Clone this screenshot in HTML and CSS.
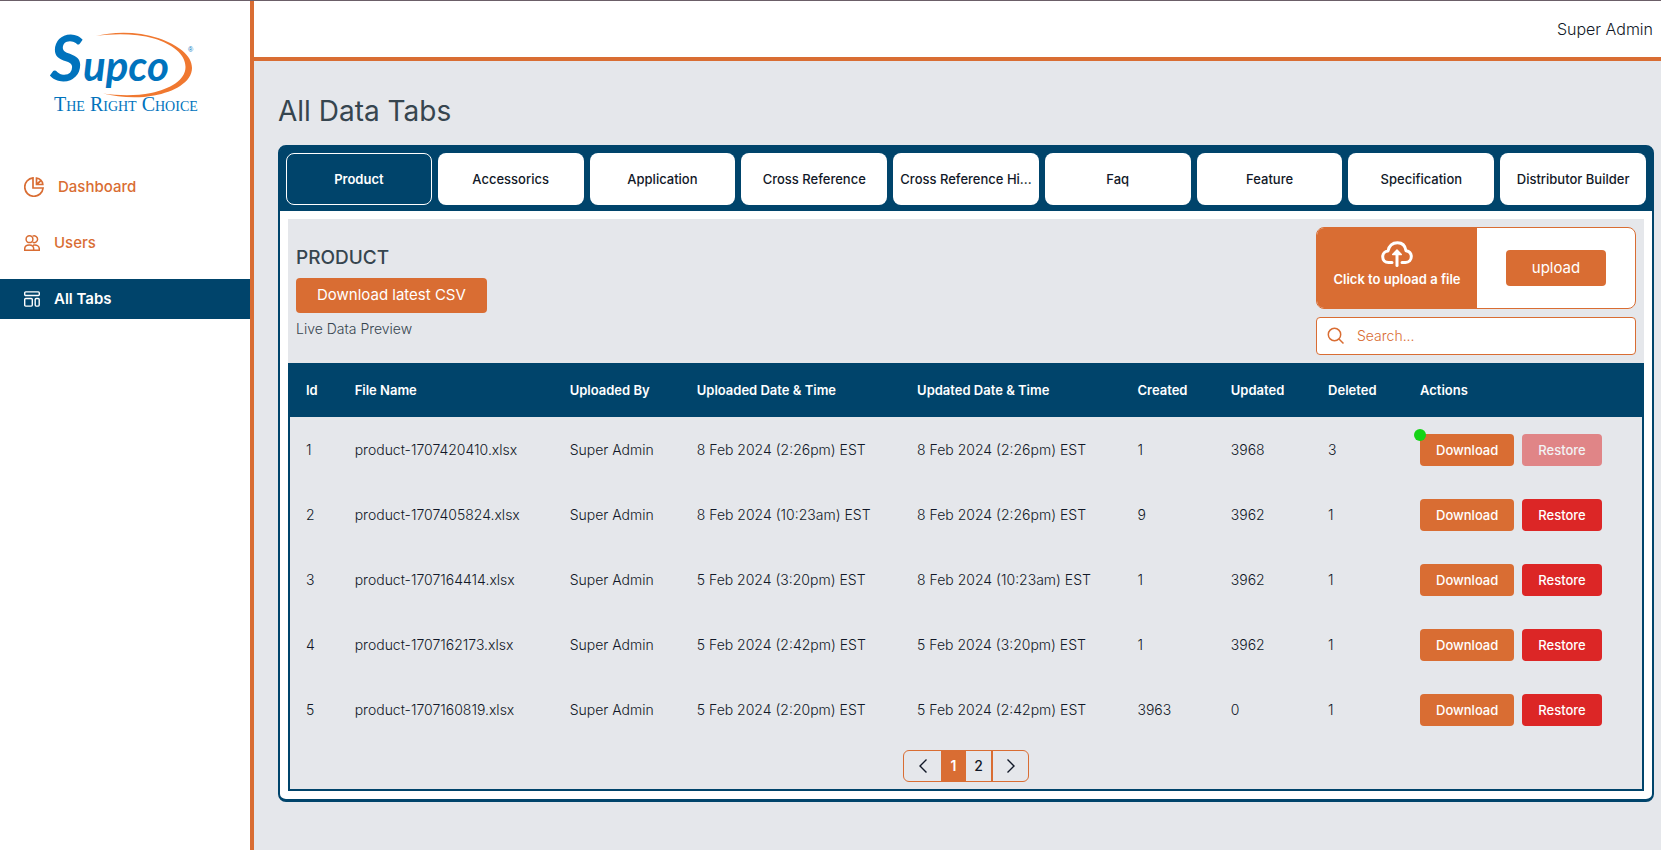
FILE: index.html
```html
<!DOCTYPE html>
<html lang="en">
<head>
<meta charset="utf-8">
<title>All Data Tabs</title>
<link rel="stylesheet" href="styles.css">
</head>
<body>
<div class="app">
  <aside class="sidebar">
    <a class="logo" href="#">
      <svg class="logo-art" width="150" height="90" viewBox="0 0 150 90" role="img" aria-label="Supco">
        <path fill="#f07830" d="M50 12C66 7.500 92 7 112 14C132 21 146 31 146 44C146 58 128 68 108 71.500C90 75 72 73 57 69.500C72 71.500 90 72 105 69C124 65 139.500 56 139.500 43C139.500 30 126 20 108 14.500C90 9 66 9.500 50 12Z"/>
        <text class="logo-word" x="4" y="57"><tspan class="logo-initial">S</tspan>upco</text>
        <text class="logo-mark" x="142" y="28">®</text>
        <text class="logo-tagline" x="8" y="87">The Right Choice</text>
      </svg>
    </a>
    <nav class="nav">
      <a class="nav-link" href="#">
        <svg width="20" height="20" viewBox="0 0 20 20" fill="none" stroke="currentColor" stroke-width="1.700"><path d="M9 .9A9.200 9.200 0 1 0 19.100 11H9ZM12.500 1.200V7.500H18.800A7 7 0 0 0 12.500 1.200ZM13 7L16.500 4"/></svg>
        <span class="nav-text">Dashboard</span>
      </a>
      <a class="nav-link" href="#">
        <svg width="16" height="16" viewBox="0 0 16 16" fill="none" stroke="currentColor" stroke-width="1.500"><circle cx="5.500" cy="4.200" r="3.400"/><path d="M8.600 1.200A3.400 3.400 0 1 1 8.600 7.200M.7 15.300V14C.7 11.500 2.500 10 5.200 10S9.700 11.500 9.700 14V15.300ZM9 10.200C13 9.300 15.300 11.300 15.300 14V15.300H9.700"/></svg>
        <span class="nav-text">Users</span>
      </a>
      <a class="nav-link nav-link-active" href="#">
        <svg width="16" height="16" viewBox="0 0 16 16" fill="none" stroke="currentColor" stroke-width="1.400"><rect x=".7" y=".9" width="14.600" height="3.600" rx="1"/><rect x=".7" y="7.500" width="7.600" height="7.600" rx="1"/><rect x="11.200" y="7.500" width="4" height="7.600" rx="1"/></svg>
        <span class="nav-text">All Tabs</span>
      </a>
    </nav>
  </aside>
  <div class="main">
    <header class="topbar">Super Admin</header>
    <main class="content">
      <h1 class="title">All Data Tabs</h1>
      <section class="panel">
        <div class="tabs">
          <button class="tab tab-active">Product</button>
          <button class="tab">Accessorics</button>
          <button class="tab">Application</button>
          <button class="tab">Cross Reference</button>
          <button class="tab">Cross Reference Hi...</button>
          <button class="tab">Faq</button>
          <button class="tab">Feature</button>
          <button class="tab">Specification</button>
          <button class="tab">Distributor Builder</button>
        </div>
        <div class="panel-body">
          <div class="toolbar">
            <div class="intro">
              <h2 class="subtitle">PRODUCT</h2>
              <button class="button button-csv">Download latest CSV</button>
              <p class="note">Live Data Preview</p>
            </div>
            <div class="tools">
              <div class="uploader">
                <button class="picker">
                  <svg width="32" height="26" viewBox="0 0 32 26" fill="none" stroke="#fff" stroke-width="3" stroke-linecap="round" stroke-linejoin="round"><path d="M11 21.500H7.500C4 21.500 1.700 19 1.700 15.800C1.700 12.500 4 10.300 7 10C8 5 11.500 1.700 16.500 1.700C21.500 1.700 24.300 5 25 9.700C28.300 10.300 30.300 12.500 30.300 15.600C30.300 19 28 21.500 24.500 21.500H21"/><path d="M16 24.500V11.500"/><path fill="#fff" stroke-width="1.500" d="M16 9L20.300 13.500H11.700Z"/></svg>
                  Click to upload a file
                </button>
                <div class="uploader-side"><button class="button button-upload">upload</button></div>
              </div>
              <label class="search">
                <svg width="18" height="18" viewBox="0 0 18 18" fill="none" stroke="currentColor" stroke-width="1.500"><circle cx="7.500" cy="7.500" r="6.200"/><path d="M12 12L16.500 16.500"/></svg>
                <input class="search-input" type="text" placeholder="Search..." aria-label="Search">
              </label>
            </div>
          </div>
          <div class="table-box">
            <table class="table">
              <colgroup><col class="col-id"><col class="col-file"><col class="col-by"><col class="col-date"><col class="col-date"><col class="col-created"><col class="col-updated"><col class="col-deleted"><col></colgroup>
              <thead>
                <tr><th>Id</th><th>File Name</th><th>Uploaded By</th><th>Uploaded Date &amp; Time</th><th>Updated Date &amp; Time</th><th>Created</th><th>Updated</th><th>Deleted</th><th>Actions</th></tr>
              </thead>
              <tbody>
                <tr><td>1</td><td>product-1707420410.xlsx</td><td>Super Admin</td><td>8 Feb 2024 (2:26pm) EST</td><td>8 Feb 2024 (2:26pm) EST</td><td>1</td><td>3968</td><td>3</td><td><div class="actions"><span class="dot"></span><button class="button">Download</button><button class="button button-restore" disabled>Restore</button></div></td></tr>
                <tr><td>2</td><td>product-1707405824.xlsx</td><td>Super Admin</td><td>8 Feb 2024 (10:23am) EST</td><td>8 Feb 2024 (2:26pm) EST</td><td>9</td><td>3962</td><td>1</td><td><div class="actions"><button class="button">Download</button><button class="button button-restore">Restore</button></div></td></tr>
                <tr><td>3</td><td>product-1707164414.xlsx</td><td>Super Admin</td><td>5 Feb 2024 (3:20pm) EST</td><td>8 Feb 2024 (10:23am) EST</td><td>1</td><td>3962</td><td>1</td><td><div class="actions"><button class="button">Download</button><button class="button button-restore">Restore</button></div></td></tr>
                <tr><td>4</td><td>product-1707162173.xlsx</td><td>Super Admin</td><td>5 Feb 2024 (2:42pm) EST</td><td>5 Feb 2024 (3:20pm) EST</td><td>1</td><td>3962</td><td>1</td><td><div class="actions"><button class="button">Download</button><button class="button button-restore">Restore</button></div></td></tr>
                <tr><td>5</td><td>product-1707160819.xlsx</td><td>Super Admin</td><td>5 Feb 2024 (2:20pm) EST</td><td>5 Feb 2024 (2:42pm) EST</td><td>3963</td><td>0</td><td>1</td><td><div class="actions"><button class="button">Download</button><button class="button button-restore">Restore</button></div></td></tr>
              </tbody>
            </table>
            <div class="pager">
              <button class="page page-step" aria-label="Previous"><svg width="8" height="14" viewBox="0 0 8 14" fill="none" stroke="currentColor" stroke-width="1.400"><path d="M7.500 .5L1 7L7.500 13.500"/></svg></button>
              <button class="page page-active">1</button>
              <button class="page">2</button>
              <button class="page page-step" aria-label="Next"><svg width="8" height="14" viewBox="0 0 8 14" fill="none" stroke="currentColor" stroke-width="1.400"><path d="M.5 .5L7 7L.5 13.500"/></svg></button>
            </div>
          </div>
        </div>
      </section>
    </main>
  </div>
</div>
</body>
</html>
```
FILE: styles.css
```css
* { box-sizing: border-box; }
body { margin: 0; font-family: Inter, "Open Sans", sans-serif; font-size: 14px; font-weight: 300; line-height: 20px; color: #111827; background: #e5e7eb; }
h1, h2, p { margin: 0; }
button { font: inherit; color: inherit; border: 0; padding: 0; cursor: pointer; }
svg { flex: none; }
.app { display: flex; min-height: 100vh; border-top: 1px solid #6b5f68; }
.sidebar { width: 254px; flex: none; background: #fff; border-right: 4px solid #d96d33; }
.logo { display: block; padding: 23px 0 0 46px; height: 158px; }
.logo-art { overflow: visible; }
.logo-word { font: italic bold 42px Lato, sans-serif; fill: #0073bd; }
.logo-initial { font-size: 64px; }
.logo-mark { font: 7px "Liberation Sans", sans-serif; fill: #0073bd; }
.logo-tagline { font: 20px "Liberation Serif", serif; font-variant: small-caps; fill: #0073bd; }
.nav { display: flex; flex-direction: column; gap: 16px; padding-top: 8px; }
.nav-link { display: flex; align-items: center; gap: 14px; height: 40px; padding-left: 24px; font-size: 15px; line-height: 24px; font-weight: 500; color: #d96d33; text-decoration: none; }
.nav-link-active { background: #00446b; color: #fff; font-weight: 600; }
.main { flex: 1; min-width: 0; }
.topbar { display: flex; align-items: center; justify-content: flex-end; height: 60px; padding: 0 8px; font-size: 16px; background: #fff; border-bottom: 4px solid #d96d33; }
.content { padding: 32px 7px 32px 24px; }
.title { margin-bottom: 16px; font-size: 28px; line-height: 36px; font-weight: 400; color: #36454f; }
.panel { background: #fff; border: 2px solid #00446b; border-bottom-width: 3px; border-radius: 8px; }
.tabs { display: grid; grid-template-columns: repeat(9, 1fr); gap: 6px; padding: 6px; background: #00446b; border-radius: 4px 4px 0 0; }
.tab { min-width: 0; height: 52px; padding: 0 4px; overflow: hidden; white-space: nowrap; text-overflow: ellipsis; font-size: 13px; font-weight: 500; background: #fff; border-radius: 8px; }
.tab-active { background: #00446b; color: #fff; border: 1px solid #fff; font-weight: 600; }
.panel-body { padding: 8px; }
.toolbar { display: flex; align-items: center; justify-content: space-between; padding: 8px; background: #e5e7eb; }
.intro { display: flex; flex-direction: column; align-items: flex-start; gap: 6px; color: #36454f; }
.subtitle { font-size: 19px; line-height: 28px; font-weight: 500; }
.button { height: 32px; padding: 0 16px; font-size: 13px; font-weight: 500; color: #fff; background: #d96d33; border-radius: 4px; }
.button-csv { height: 35px; padding: 0 21px; font-size: 15px; font-weight: 400; }
.button-upload { height: 36px; padding: 0 26px; font-size: 15px; font-weight: 400; }
.button-restore { background: #dc2626; }
.button-restore:disabled { opacity: .5; }
.tools { display: flex; flex-direction: column; gap: 8px; width: 320px; }
.uploader { display: flex; height: 82px; overflow: hidden; background: #fff; border: 1px solid #d96d33; border-radius: 8px; }
.picker { display: flex; flex-direction: column; align-items: center; justify-content: center; gap: 2px; width: 160px; padding-bottom: 6px; font-size: 13px; font-weight: 600; color: #fff; background: #d96d33; }
.uploader-side { display: flex; flex: 1; align-items: center; justify-content: center; }
.search { display: flex; align-items: center; gap: 12px; height: 38px; padding: 0 10px; color: #d96d33; background: #fff; border: 1px solid #d96d33; border-radius: 4px; }
.search-input { flex: 1; min-width: 0; padding: 0; border: 0; outline: 0; font: inherit; color: inherit; background: none; }
.search-input::placeholder { color: #d96d33; opacity: 1; }
.table-box { background: #e5e7eb; border: 2px solid #00446b; border-top: 0; }
.table { width: 100%; table-layout: fixed; border-collapse: collapse; text-align: left; white-space: nowrap; }
.table th { height: 54px; padding: 0 16px; font-size: 13px; font-weight: 600; color: #fff; background: #00446b; }
.table td { height: 65px; padding: 0 16px; }
.col-id { width: 3.6%; }
.col-file { width: 15.9%; }
.col-by { width: 9.4%; }
.col-date { width: 16.3%; }
.col-created { width: 6.9%; }
.col-updated { width: 7.2%; }
.col-deleted { width: 6.8%; }
.actions { position: relative; display: flex; gap: 8px; }
.dot { position: absolute; top: -5px; left: -6px; width: 12px; height: 12px; background: #16d316; border-radius: 50%; }
.pager { display: flex; width: max-content; height: 32px; margin: 8px auto 7px; overflow: hidden; border: 1px solid #d96d33; border-radius: 6px; }
.page { display: flex; align-items: center; justify-content: center; width: 25px; font-weight: 500; background: none; }
.page-step { width: 37px; }
.page-step:last-child { border-left: 2px solid #d96d33; }
.page-active { color: #fff; background: #d96d33; font-weight: 600; }
```
